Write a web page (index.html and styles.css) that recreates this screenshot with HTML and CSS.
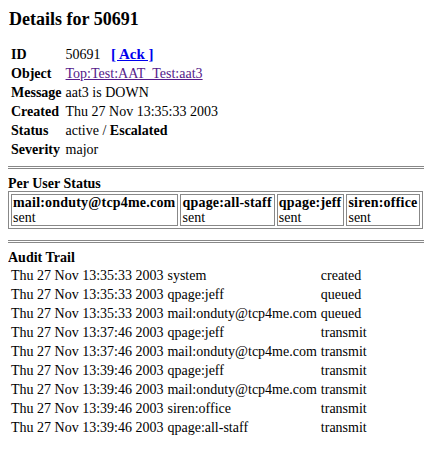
FILE: index.html
```html
<!DOCTYPE html>
<html>
<head>
<meta charset="utf-8">
<link rel="stylesheet" href="styles.css">
</head>
<body>
<h1 class="title">Details for 50691</h1>
<table class="details">
<tr><th>ID</th><td>50691 &nbsp; <a class="ack" href="#">[ Ack ]</a></td></tr>
<tr><th>Object</th><td><a class="obj" href="#">Top:Test:AAT_Test:aat3</a></td></tr>
<tr><th>Message</th><td>aat3 is DOWN</td></tr>
<tr><th>Created</th><td>Thu 27 Nov 13:35:33 2003</td></tr>
<tr><th>Status</th><td>active / <b>Escalated</b></td></tr>
<tr><th>Severity</th><td>major</td></tr>
</table>
<hr class="rule">
<h3 class="section">Per User Status</h3>
<table class="users">
<tr>
<td><b>mail:onduty@tcp4me.com</b><br>sent</td>
<td><b>qpage:all-staff</b><br>sent</td>
<td><b>qpage:jeff</b><br>sent</td>
<td><b>siren:office</b><br>sent</td>
</tr>
</table>
<hr class="rule rule2">
<h3 class="section">Audit Trail</h3>
<table class="audit">
<tr><td>Thu 27 Nov 13:35:33 2003</td><td>system</td><td>created</td></tr>
<tr><td>Thu 27 Nov 13:35:33 2003</td><td>qpage:jeff</td><td>queued</td></tr>
<tr><td>Thu 27 Nov 13:35:33 2003</td><td>mail:onduty@tcp4me.com</td><td>queued</td></tr>
<tr><td>Thu 27 Nov 13:37:46 2003</td><td>qpage:jeff</td><td>transmit</td></tr>
<tr><td>Thu 27 Nov 13:37:46 2003</td><td>mail:onduty@tcp4me.com</td><td>transmit</td></tr>
<tr><td>Thu 27 Nov 13:39:46 2003</td><td>qpage:jeff</td><td>transmit</td></tr>
<tr><td>Thu 27 Nov 13:39:46 2003</td><td>mail:onduty@tcp4me.com</td><td>transmit</td></tr>
<tr><td>Thu 27 Nov 13:39:46 2003</td><td>siren:office</td><td>transmit</td></tr>
<tr><td>Thu 27 Nov 13:39:46 2003</td><td>qpage:all-staff</td><td>transmit</td></tr>
</table>
</body>
</html>
```
FILE: styles.css
```css
html, body {
  background: #ffffff;
}
body {
  margin: 8px;
  font-family: "Liberation Serif", "Times New Roman", serif;
  font-size: 14px;
  color: #000000;
}
.title {
  font-size: 18px;
  font-weight: bold;
  margin: 0 0 0 1px;
  height: 22px;
  line-height: 22px;
}
.details {
  margin-top: 14px;
  border-collapse: separate;
  border-spacing: 2px;
}
.details th {
  text-align: left;
  font-weight: bold;
  padding: 0 1px;
  line-height: 17px;
  vertical-align: top;
}
.details td {
  padding: 0 1px;
  line-height: 17px;
}
.ack {
  color: #0000ee;
  font-weight: bold;
  font-size: 15px;
}
.obj {
  color: #551a8b;
}
.rule {
  border: 0;
  border-top: 1px solid #888888;
  border-bottom: 1px solid #888888;
  height: 1px;
  margin: 6px 0 0 0;
}
.rule2 {
  margin-top: 11px;
}
.section {
  font-size: 14px;
  font-weight: bold;
  margin: 7px 0 0 0;
  line-height: 15px;
}
.users {
  border: 1px solid #888888;
  border-spacing: 2px;
  margin-top: 0;
}
.users td {
  border: 1px solid #888888;
  padding: 0 2px 0 1px;
  line-height: 15px;
}
.users b {
  letter-spacing: 0.2px;
}
.audit {
  border-spacing: 2px;
  margin-top: 0;
}
.audit td {
  padding: 0 1px;
  line-height: 17px;
  white-space: nowrap;
}
```
